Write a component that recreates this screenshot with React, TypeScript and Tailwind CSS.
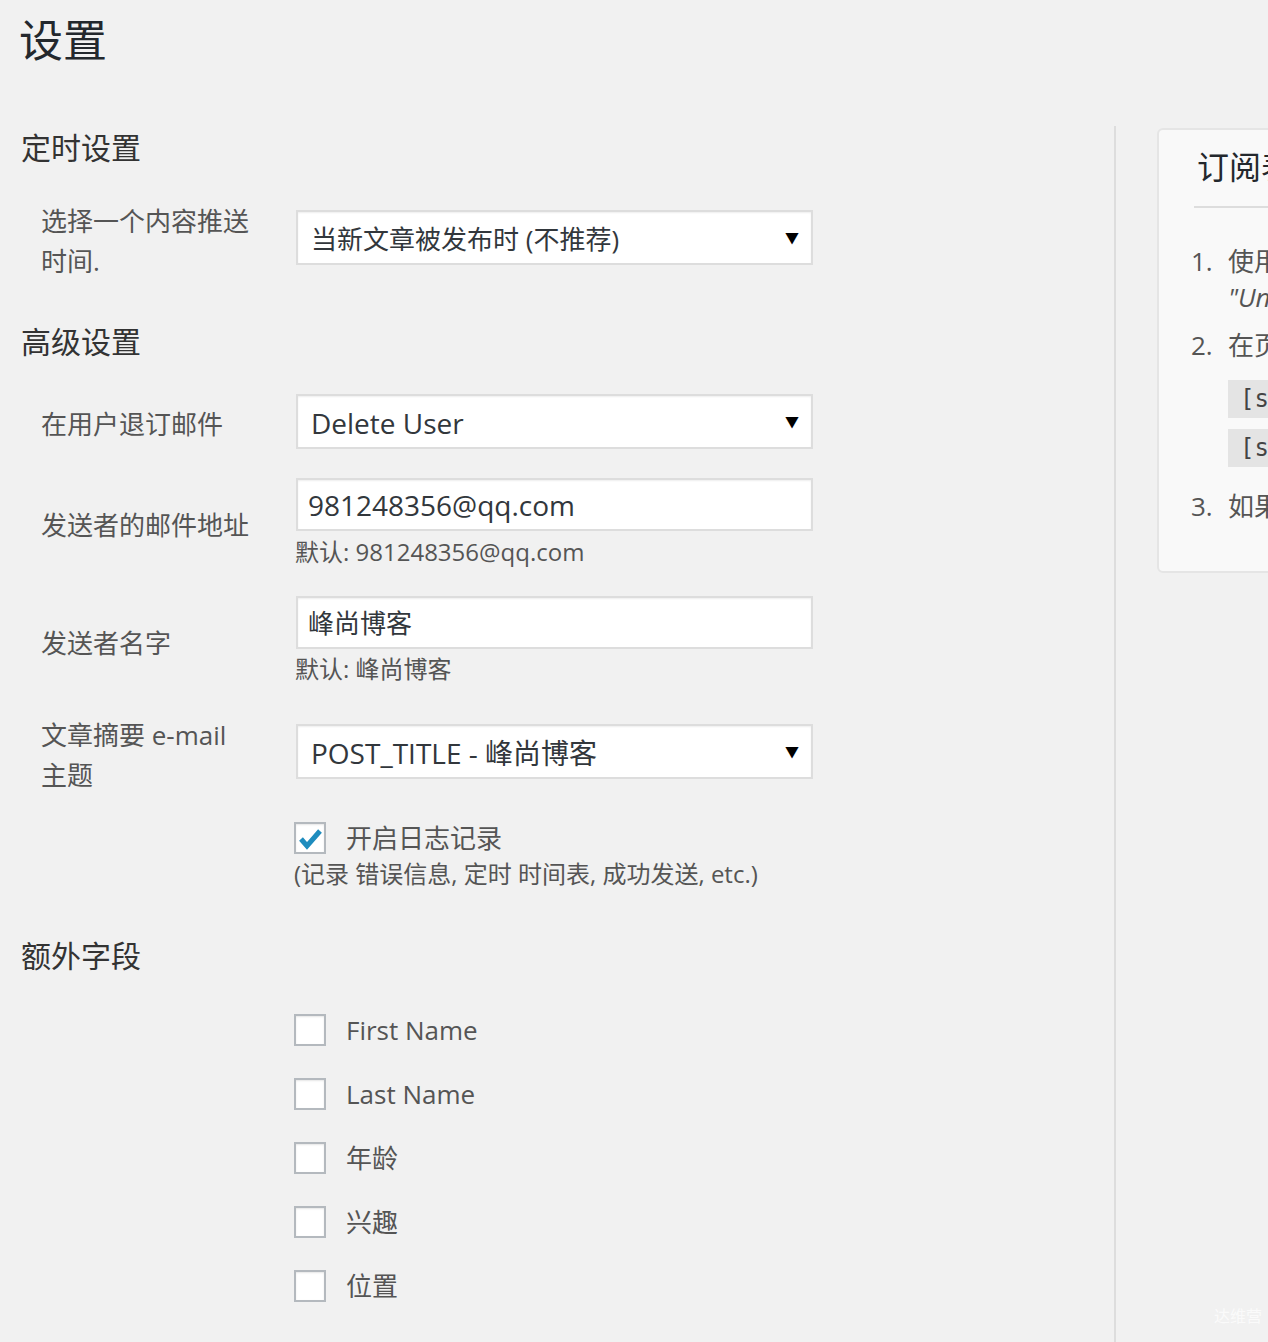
import React from 'react';

const FONT = '"Open Sans", "Noto Sans CJK SC", sans-serif';

function Select({ value, cjk }: { value: string; cjk?: boolean }) {
  return (
    <div className="flex h-[55px] w-[517px] items-center justify-between border-2 border-[#dddddd] bg-white pl-[13px] pr-[12px] shadow-[inset_0_1px_2px_rgba(0,0,0,0.07)]">
      <span className={`${cjk ? 'text-[26px]' : 'text-[28px]'} mt-[2px] leading-none text-[#32373c]`}>{value}</span>
      <span className="text-[14px] leading-none text-black">▼</span>
    </div>
  );
}

function TextInput({ value, cjk }: { value: string; cjk?: boolean }) {
  return (
    <div className="flex h-[53px] w-[517px] items-center border-2 border-[#dddddd] bg-white pl-[10px] shadow-[inset_0_1px_2px_rgba(0,0,0,0.07)]">
      <span className={`${cjk ? 'text-[26px]' : 'text-[28px]'} leading-none text-[#32373c]`}>{value}</span>
    </div>
  );
}

function Checkbox({ checked }: { checked?: boolean }) {
  return (
    <div className="flex h-[32px] w-[32px] shrink-0 items-center justify-center border-2 border-[#b4b9be] bg-white shadow-[inset_0_1px_2px_rgba(0,0,0,0.1)]">
      {checked && (
        <svg width="28" height="28" viewBox="0 0 28 28">
          <path d="M5 15 L11 22 L24 7" fill="none" stroke="#1e8cbe" strokeWidth="5" strokeLinejoin="miter" />
        </svg>
      )}
    </div>
  );
}

export default function App() {
  const extraFields = ['First Name', 'Last Name', '年龄', '兴趣', '位置'];

  return (
    <div className="relative h-[1342px] w-[1268px] overflow-hidden bg-[#f1f1f1]" style={{ fontFamily: FONT }}>
      {/* page title */}
      <div className="h-[120px] pl-[19px] pt-[12px]">
        <h1 className="text-[44px] font-normal leading-[56px] text-[#23282d]">设置</h1>
      </div>

      <div className="flex">
        {/* settings form */}
        <div className="w-[1114px] shrink-0 pl-[21px]">
          <h2 className="mt-[8px] text-[30px] leading-[40px] text-[#333]">定时设置</h2>

          <div className="mt-[33px] grid grid-cols-[255px_517px] pl-[20px]">
            <div className="w-[215px] text-[26px] leading-[40px] text-[#555]">选择一个内容推送时间.</div>
            <div className="mt-[9px]">
              <Select value="当新文章被发布时 (不推荐)" cjk />
            </div>
          </div>

          <h2 className="mt-[41px] text-[30px] leading-[40px] text-[#333]">高级设置</h2>

          <div className="mt-[32px] grid grid-cols-[255px_517px] pl-[20px]">
            <div className="mt-[10px] text-[26px] leading-[40px] text-[#555]">在用户退订邮件</div>
            <Select value="Delete User" />
          </div>

          <div className="mt-[29px] grid grid-cols-[255px_517px] pl-[20px]">
            <div className="mt-[27px] text-[26px] leading-[40px] text-[#555]">发送者的邮件地址</div>
            <div>
              <TextInput value="981248356@qq.com" />
              <p className="-ml-[1px] mt-[5px] text-[24px] leading-[32px] text-[#555]">默认: 981248356@qq.com</p>
            </div>
          </div>

          <div className="mt-[28px] grid grid-cols-[255px_517px] pl-[20px]">
            <div className="mt-[27px] text-[26px] leading-[40px] text-[#555]">发送者名字</div>
            <div>
              <TextInput value="峰尚博客" cjk />
              <p className="-ml-[1px] mt-[4px] text-[24px] leading-[32px] text-[#555]">默认: 峰尚博客</p>
            </div>
          </div>

          <div className="mt-[30px] grid grid-cols-[255px_517px] pl-[20px]">
            <div className="w-[200px] text-[26px] leading-[40px] text-[#555]">文章摘要 e-mail 主题</div>
            <div className="mt-[9px]">
              <Select value="POST_TITLE - 峰尚博客" />
            </div>
          </div>

          <div className="mt-[27px] pl-[273px]">
            <div className="flex items-center gap-[20px]">
              <Checkbox checked />
              <span className="text-[26px] leading-[32px] text-[#555]">开启日志记录</span>
            </div>
            <p className="mt-[4px] text-[24px] leading-[32px] text-[#555]">(记录 错误信息, 定时 时间表, 成功发送, etc.)</p>
          </div>

          <h2 className="mt-[46px] text-[30px] leading-[40px] text-[#333]">额外字段</h2>

          <div className="mt-[38px] flex flex-col gap-[32px] pl-[273px]">
            {extraFields.map((f) => (
              <div key={f} className="flex items-center gap-[20px]">
                <Checkbox />
                <span className="text-[26px] leading-[32px] text-[#555]">{f}</span>
              </div>
            ))}
          </div>
        </div>

        {/* sidebar */}
        <div className="mt-[6px] min-h-[1216px] border-l-2 border-[#dddddd] pl-[41px] pt-[2px]">
          <div className="w-[600px] rounded-[6px] border-2 border-[#e5e5e5] bg-[#f9f9f9] px-[35px] pb-[47px] pt-[17px]">
            <h3 className="pl-[3px] text-[32px] font-normal leading-[40px] text-[#23282d]">订阅表单使用说明</h3>
            <div className="mt-[19px] h-[2px] bg-[#dddddd]" />

            <ol className="-ml-[3px] mt-[35px] text-[26px] leading-[36px] text-[#555]">
              <li className="flex">
                <span className="w-[37px] shrink-0">1.</span>
                <div>
                  <div className="whitespace-nowrap">使用小工具添加订阅表单到侧边栏</div>
                  <div className="whitespace-nowrap italic">"Unsubscriber Widget"</div>
                </div>
              </li>
              <li className="mt-[12px] flex">
                <span className="w-[37px] shrink-0">2.</span>
                <div>
                  <div className="whitespace-nowrap">在页面或文章中插入以下简码:</div>
                  <div className="mt-[17px] flex flex-col gap-[11px]">
                    <code className="w-fit whitespace-nowrap bg-[#e4e4e4] px-[12px] text-[24px] leading-[38px] text-[#444]" style={{ fontFamily: '"DejaVu Sans Mono", monospace' }}>[subscribe_form]</code>
                    <code className="w-fit whitespace-nowrap bg-[#e4e4e4] px-[12px] text-[24px] leading-[38px] text-[#444]" style={{ fontFamily: '"DejaVu Sans Mono", monospace' }}>[subscribe_form list="1"]</code>
                  </div>
                </div>
              </li>
              <li className="mt-[21px] flex">
                <span className="w-[37px] shrink-0">3.</span>
                <div className="whitespace-nowrap">如果需要帮助请访问插件主页</div>
              </li>
            </ol>
          </div>
        </div>
      </div>

      {/* watermark */}
      <span className="absolute bottom-[18px] right-[6px] text-[16px] leading-none text-white/70">达维营</span>
    </div>
  );
}
